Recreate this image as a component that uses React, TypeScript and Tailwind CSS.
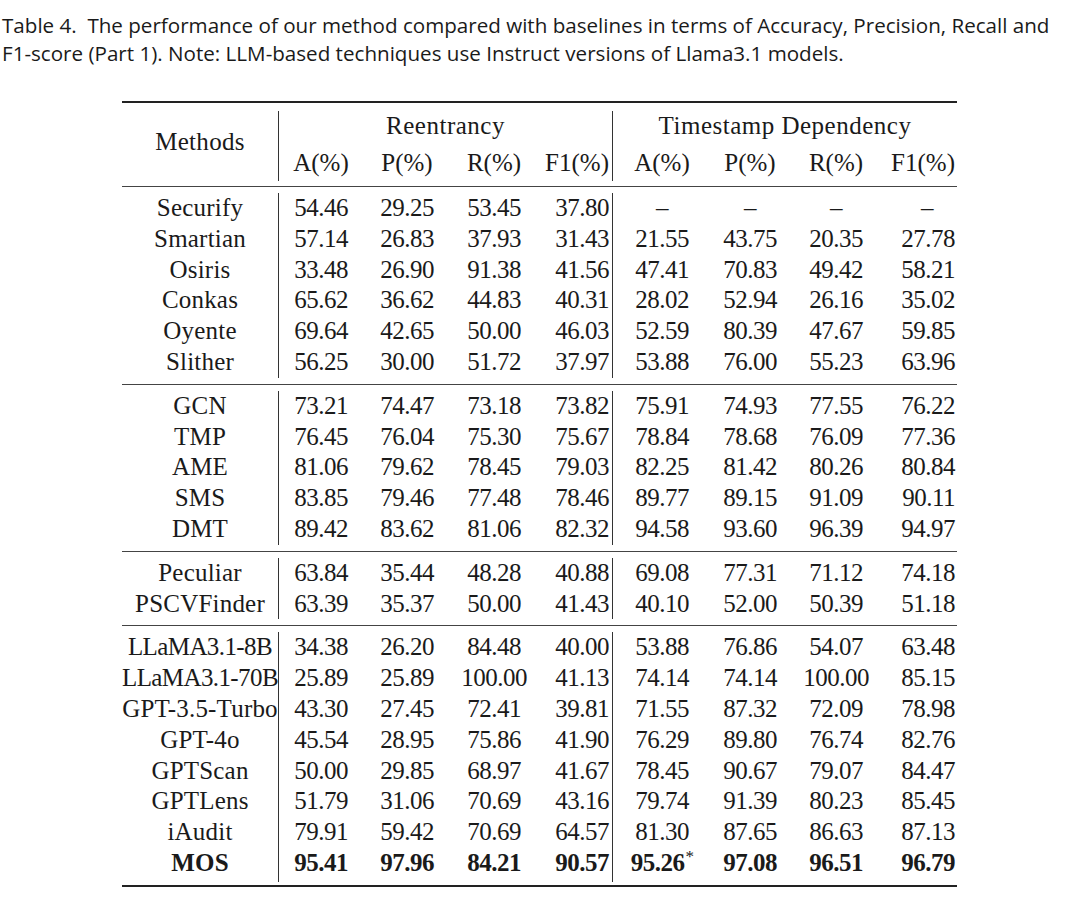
import React from 'react'

type Row = {
  name: string
  vals: string[]
  bold?: boolean
  tight?: boolean
}

const groups: Row[][] = [
  [
    { name: 'Securify', vals: ['54.46', '29.25', '53.45', '37.80', '–', '–', '–', '–'] },
    { name: 'Smartian', vals: ['57.14', '26.83', '37.93', '31.43', '21.55', '43.75', '20.35', '27.78'] },
    { name: 'Osiris', vals: ['33.48', '26.90', '91.38', '41.56', '47.41', '70.83', '49.42', '58.21'] },
    { name: 'Conkas', vals: ['65.62', '36.62', '44.83', '40.31', '28.02', '52.94', '26.16', '35.02'] },
    { name: 'Oyente', vals: ['69.64', '42.65', '50.00', '46.03', '52.59', '80.39', '47.67', '59.85'] },
    { name: 'Slither', vals: ['56.25', '30.00', '51.72', '37.97', '53.88', '76.00', '55.23', '63.96'] },
  ],
  [
    { name: 'GCN', vals: ['73.21', '74.47', '73.18', '73.82', '75.91', '74.93', '77.55', '76.22'] },
    { name: 'TMP', vals: ['76.45', '76.04', '75.30', '75.67', '78.84', '78.68', '76.09', '77.36'] },
    { name: 'AME', vals: ['81.06', '79.62', '78.45', '79.03', '82.25', '81.42', '80.26', '80.84'] },
    { name: 'SMS', vals: ['83.85', '79.46', '77.48', '78.46', '89.77', '89.15', '91.09', '90.11'] },
    { name: 'DMT', vals: ['89.42', '83.62', '81.06', '82.32', '94.58', '93.60', '96.39', '94.97'] },
  ],
  [
    { name: 'Peculiar', vals: ['63.84', '35.44', '48.28', '40.88', '69.08', '77.31', '71.12', '74.18'] },
    { name: 'PSCVFinder', vals: ['63.39', '35.37', '50.00', '41.43', '40.10', '52.00', '50.39', '51.18'] },
  ],
  [
    { name: 'LLaMA3.1-8B', tight: true, vals: ['34.38', '26.20', '84.48', '40.00', '53.88', '76.86', '54.07', '63.48'] },
    { name: 'LLaMA3.1-70B', tight: true, vals: ['25.89', '25.89', '100.00', '41.13', '74.14', '74.14', '100.00', '85.15'] },
    { name: 'GPT-3.5-Turbo', vals: ['43.30', '27.45', '72.41', '39.81', '71.55', '87.32', '72.09', '78.98'] },
    { name: 'GPT-4o', vals: ['45.54', '28.95', '75.86', '41.90', '76.29', '89.80', '76.74', '82.76'] },
    { name: 'GPTScan', vals: ['50.00', '29.85', '68.97', '41.67', '78.45', '90.67', '79.07', '84.47'] },
    { name: 'GPTLens', vals: ['51.79', '31.06', '70.69', '43.16', '79.74', '91.39', '80.23', '85.45'] },
    { name: 'iAudit', vals: ['79.91', '59.42', '70.69', '64.57', '81.30', '87.65', '86.63', '87.13'] },
    { name: 'MOS', bold: true, vals: ['95.41', '97.96', '84.21', '90.57', '95.26*', '97.08', '96.51', '96.79'] },
  ],
]

const cols = 'grid grid-cols-[157px_84px_88px_86px_76px_98px_78px_94px_74px]'

function Cell({ v, i }: { v: string; i: number }) {
  const star = v.endsWith('*')
  const text = star ? v.slice(0, -1) : v
  const dash = v === '–'
  let cls = 'text-center'
  if (i === 3) cls = 'text-right pr-[3px] border-r border-[#333]'
  if (i === 7) cls = dash ? 'text-center pl-[14px]' : 'text-right pr-[2px]'
  return (
    <div className={`${cls} tracking-[-0.5px] whitespace-nowrap`}>
      {text}
      {star && <span className="text-[17px] font-normal relative -top-[9px] ml-[1px]">*</span>}
    </div>
  )
}

function Group({ rows }: { rows: Row[] }) {
  return (
    <div className="py-[6px]">
      {rows.map((r) => (
        <div key={r.name} className={`${cols} h-[30.8px] leading-[30.8px] ${r.bold ? 'font-bold' : ''}`}>
          <div
            className={`text-center border-r border-[#333] whitespace-nowrap ${r.tight ? 'tracking-[-0.6px]' : 'tracking-[0.2px]'}`}
          >
            {r.name}
          </div>
          {r.vals.map((v, i) => (
            <Cell key={i} v={v} i={i} />
          ))}
        </div>
      ))}
    </div>
  )
}

export default function App() {
  return (
    <div className="w-[1080px] h-[906px] bg-white text-[#1a1a1a] overflow-hidden">
      <div className="pt-[11px] pl-[2px] text-[20.6px] leading-[28px] whitespace-nowrap font-['Open_Sans',sans-serif]">
        Table 4.&nbsp; The performance of our method compared with baselines in terms of Accuracy, Precision, Recall and
        <br />
        F1-score (Part 1). Note: LLM-based techniques use Instruct versions of Llama3.1 models.
      </div>

      <div className="mt-[34px] ml-[122px] w-[835px] font-['Liberation_Serif',serif] text-[25px]">
        <div className="border-t-2 border-[#222]" />
        <div className="pt-[8px] pb-[5px]">
          <div className={`${cols} grid-rows-[35px_35px]`}>
            <div className="row-span-2 border-r border-[#333] flex items-center justify-center pb-[8px] tracking-[0.3px]">
              Methods
            </div>
            <div className="col-span-4 border-r border-[#333] text-center leading-[30px] tracking-[0.5px]">
              Reentrancy
            </div>
            <div className="col-span-4 text-center leading-[30px] tracking-[0.5px]">Timestamp Dependency</div>
            <div className="text-center leading-[34px]">A(%)</div>
            <div className="text-center leading-[34px]">P(%)</div>
            <div className="text-center leading-[34px]">R(%)</div>
            <div className="text-right pr-[3px] leading-[34px] border-r border-[#333]">F1(%)</div>
            <div className="text-center leading-[34px]">A(%)</div>
            <div className="text-center leading-[34px]">P(%)</div>
            <div className="text-center leading-[34px]">R(%)</div>
            <div className="text-right pr-[2px] leading-[34px]">F1(%)</div>
          </div>
        </div>
        {groups.map((g, gi) => (
          <div key={gi}>
            <div className="border-t border-[#444]" />
            <Group rows={g} />
          </div>
        ))}
        <div className="border-t-2 border-[#222]" />
      </div>
    </div>
  )
}
